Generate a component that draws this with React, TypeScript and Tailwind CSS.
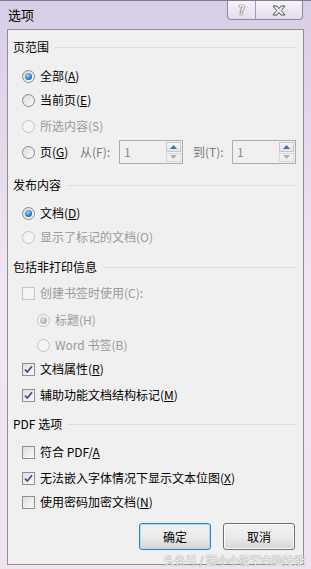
import type { ReactNode } from "react";

function Radio({ checked, disabled }: { checked?: boolean; disabled?: boolean }) {
  return (
    <span
      className={`relative flex h-[13px] w-[13px] shrink-0 items-center justify-center rounded-full border ${
        disabled ? "border-[#c4c4c4] bg-[#f4f4f4]" : "border-[#8a8a8a] bg-gradient-to-br from-[#dcdcdc] to-[#fbfbfb]"
      }`}
    >
      {checked && (
        <span
          className={`h-[7px] w-[7px] rounded-full ${
            disabled
              ? "bg-[radial-gradient(circle_at_40%_35%,#e0e0e0,#9a9a9a)]"
              : "bg-[radial-gradient(circle_at_40%_35%,#a9dcff,#2a7fc6_55%,#0d4f8f)]"
          }`}
        />
      )}
    </span>
  );
}

function Check({ checked, disabled }: { checked?: boolean; disabled?: boolean }) {
  return (
    <span
      className={`flex h-[13px] w-[13px] shrink-0 items-center justify-center border ${
        disabled ? "border-[#c6c6c6] bg-[#f4f4f4]" : "border-[#8e8f8f] bg-gradient-to-br from-[#dedede] to-[#fafafa]"
      }`}
    >
      {checked && (
        <svg width="9" height="9" viewBox="0 0 9 9">
          <path d="M1 4.6 L3.4 7 L8 1.2" fill="none" stroke="#3d4f8c" strokeWidth="1.7" />
        </svg>
      )}
    </span>
  );
}

function Header({ children, mt }: { children: ReactNode; mt: string }) {
  return (
    <div className={`flex h-6 items-center gap-[6px] pl-[5px] pr-[6px] ${mt}`}>
      <span className="whitespace-nowrap text-black">{children}</span>
      <span className="h-px flex-1 bg-[#d5dfe5]" />
    </div>
  );
}

function Row({
  control,
  children,
  mt = "",
  indent = "pl-[14px]",
  disabled,
}: {
  control: ReactNode;
  children: ReactNode;
  mt?: string;
  indent?: string;
  disabled?: boolean;
}) {
  return (
    <div className={`flex h-6 items-center gap-[5px] ${indent} ${mt}`}>
      {control}
      <span className={`whitespace-nowrap ${disabled ? "text-[#9a9a9a]" : "text-black"}`}>{children}</span>
    </div>
  );
}

function Spin() {
  return (
    <div className="flex h-[24px] w-[64px] border border-[#acacac] bg-[#f0f0f0] p-px">
      <span className="flex-1 pl-[3px] leading-[20px] text-[#8a8a9a]">1</span>
      <div className="flex w-[15px] flex-col gap-px">
        <span className="flex flex-1 items-center justify-center border border-[#c8c8c8] bg-gradient-to-b from-[#f6f6f6] to-[#e2e2e2]">
          <svg width="7" height="4" viewBox="0 0 7 4">
            <path d="M0 4 L3.5 0 L7 4 Z" fill="#4a6fa5" />
          </svg>
        </span>
        <span className="flex flex-1 items-center justify-center border border-[#d8d8d8] bg-[#f0f0f0]">
          <svg width="7" height="4" viewBox="0 0 7 4">
            <path d="M0 0 L3.5 4 L7 0 Z" fill="#b0b0b0" />
          </svg>
        </span>
      </div>
    </div>
  );
}

export default function App() {
  return (
    <div
      className="relative h-[569px] w-[311px] overflow-hidden bg-gradient-to-b from-[#d8cde6] via-[#f1e6f2] to-[#efe3f0] text-[12px]"
      style={{ fontFamily: '"Noto Sans CJK SC", "Noto Sans", sans-serif' }}
    >
      {/* title bar */}
      <div className="flex h-[29px] items-start justify-between border-t border-[#7c7c95]">
        <span className="pl-[8px] pt-[6px] leading-[16px] text-[13px] text-black">选项</span>
        <div className="mr-[8px] flex h-[19px] rounded-b-[4px] border border-t-0 border-[#8b8b9c] bg-gradient-to-b from-[#f7f3fa] to-[#e4dcec]">
          <span className="flex w-[28px] items-center justify-center border-r border-[#9c9cac] text-[13px] font-bold text-[#f4f4f4] [text-shadow:0_0_1px_#333,0_0_1px_#333]">
            ?
          </span>
          <span className="flex w-[46px] items-center justify-center">
            <svg width="14" height="11" viewBox="0 0 14 11">
              <path
                d="M1 1 L5 1 L7 3.6 L9 1 L13 1 L9.4 5.5 L13 10 L9 10 L7 7.4 L5 10 L1 10 L4.6 5.5 Z"
                fill="#f2f2f2"
                stroke="#555"
                strokeWidth="1"
              />
            </svg>
          </span>
        </div>
      </div>

      {/* content panel */}
      <div className="mx-[7px] flex h-[536px] flex-col border border-[#8e8f8f] bg-[#f0f0f0] pt-[5px]">
        <Header mt="">页范围</Header>
        <Row control={<Radio checked />} mt="mt-[5px]">
          全部(<u>A</u>)
        </Row>
        <Row control={<Radio />}>
          当前页(<u>E</u>)
        </Row>
        <Row control={<Radio disabled />} mt="mt-[2px]" disabled>
          所选内容(S)
        </Row>
        <div className="mt-[2px] flex h-6 items-center pl-[14px]">
          <Radio />
          <span className="ml-[5px] w-[40px] whitespace-nowrap">
            页(<u>G</u>)
          </span>
          <span className="w-[39px] text-[#7a7a7a]">从(F):</span>
          <Spin />
          <span className="ml-[10px] w-[39px] text-[#7a7a7a]">到(T):</span>
          <Spin />
        </div>

        <Header mt="mt-[9px]">发布内容</Header>
        <Row control={<Radio checked />} mt="mt-[4px]">
          文档(<u>D</u>)
        </Row>
        <Row control={<Radio disabled />} disabled>
          显示了标记的文档(O)
        </Row>

        <Header mt="mt-[6px]">包括非打印信息</Header>
        <Row control={<Check disabled />} mt="mt-[2px]" disabled>
          创建书签时使用(C):
        </Row>
        <Row control={<Radio checked disabled />} mt="mt-[3px]" indent="pl-[29px]" disabled>
          标题(H)
        </Row>
        <Row control={<Radio disabled />} mt="mt-[1px]" indent="pl-[29px]" disabled>
          Word 书签(B)
        </Row>
        <Row control={<Check checked />}>
          文档属性(<u>R</u>)
        </Row>
        <Row control={<Check checked />} mt="mt-[2px]">
          辅助功能文档结构标记(<u>M</u>)
        </Row>

        <Header mt="mt-[5px]">PDF 选项</Header>
        <Row control={<Check />} mt="mt-[4px]">
          符合 PDF/<u>A</u>
        </Row>
        <Row control={<Check checked />} mt="mt-[2px]">
          无法嵌入字体情况下显示文本位图(<u>X</u>)
        </Row>
        <Row control={<Check />}>
          使用密码加密文档(<u>N</u>)
        </Row>

        <div className="mt-[9px] flex justify-end gap-[12px] pr-[8px]">
          <button className="h-[27px] w-[72px] rounded-[3px] border border-[#3c7fb1] bg-gradient-to-b from-[#f2f2f2] via-[#ebebeb] to-[#d6d6d6] text-black shadow-[inset_0_0_0_1px_#a9dcf6]">
            确定
          </button>
          <button className="h-[27px] w-[72px] rounded-[3px] border border-[#707070] bg-gradient-to-b from-[#f2f2f2] via-[#ebebeb] to-[#d6d6d6] text-black shadow-[inset_0_0_0_1px_#fcfcfc]">
            取消
          </button>
        </div>
      </div>

      {/* watermark */}
      <span className="absolute bottom-[1px] right-[6px] whitespace-nowrap text-[11px] leading-[16px] text-[#f4f4f4] [text-shadow:0_0_1px_#999,0_0_1px_#999]">
        头条号 / 跟小小筱学电脑技能
      </span>
    </div>
  );
}
